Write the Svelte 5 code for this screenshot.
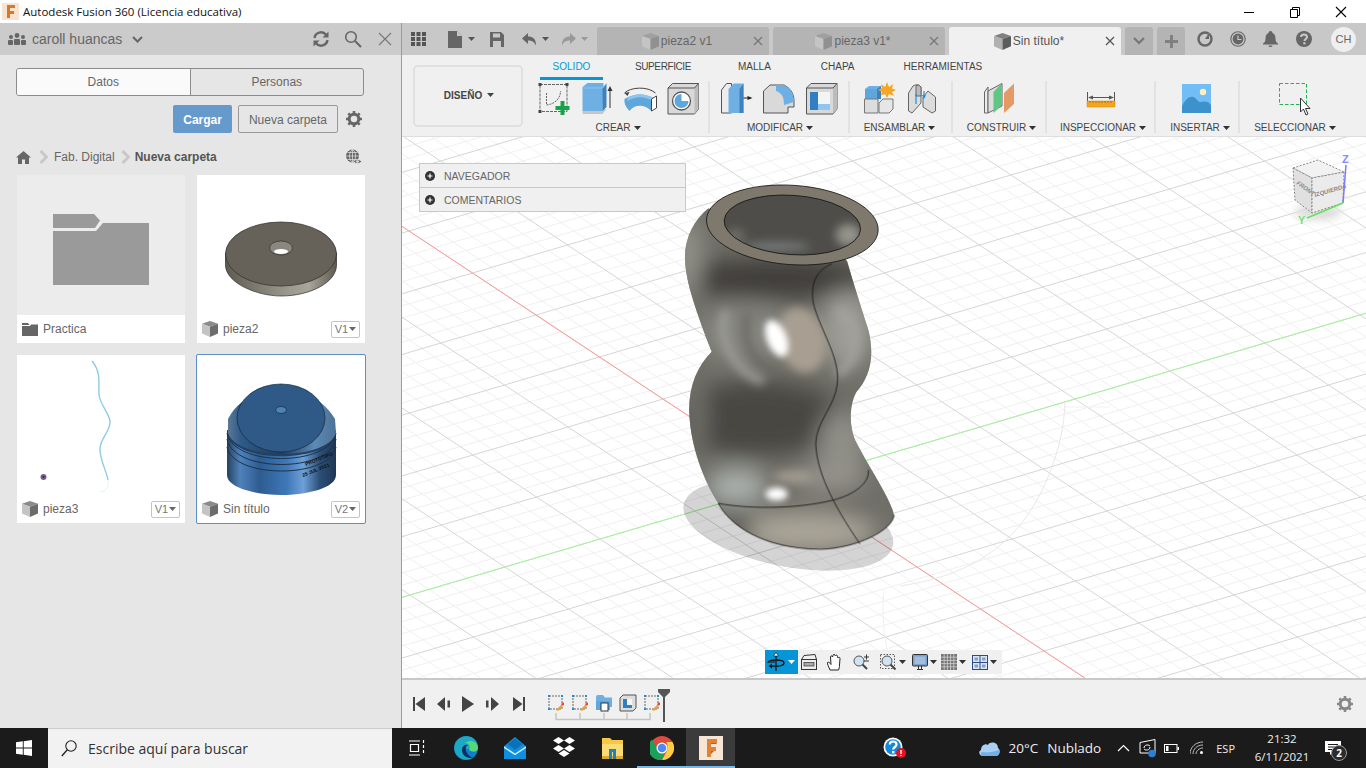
<script>
  // Ground grid: parallel projection, major cell vectors measured off the axes
  const O = [790, 483];
  const A = [63.5, 42];
  const B = [95, -28];
  const L = 30;

  function seg(u1, v1, u2, v2) {
    const x1 = O[0] + u1 * A[0] + v1 * B[0];
    const y1 = O[1] + u1 * A[1] + v1 * B[1];
    const x2 = O[0] + u2 * A[0] + v2 * B[0];
    const y2 = O[1] + u2 * A[1] + v2 * B[1];
    return `M${x1.toFixed(1)} ${y1.toFixed(1)}L${x2.toFixed(1)} ${y2.toFixed(1)}`;
  }

  let minor = '';
  let major = '';
  for (let i = -L * 5; i <= L * 5; i++) {
    const t = i / 5;
    const d = seg(t, -L, t, L) + seg(-L, t, L, t);
    if (i % 5 === 0) major += d;
    else minor += d;
  }

  // nudge: left margin on the label, it is centred so half of it shows
  const groups = [
    { name: 'CREAR', w: 180, nudge: -2 },
    { name: 'MODIFICAR', w: 140, nudge: 2 },
    { name: 'ENSAMBLAR', w: 103, nudge: -2 },
    { name: 'CONSTRUIR', w: 94, nudge: 5 },
    { name: 'INSPECCIONAR', w: 109, nudge: 5 },
    { name: 'INSERTAR', w: 84, nudge: 6 },
    { name: 'SELECCIONAR', w: 108, nudge: 2 }
  ];
  const ribbonTabs = ['SOLIDO', 'SUPERFICIE', 'MALLA', 'CHAPA', 'HERRAMIENTAS'];
</script>

{#snippet cube(size, top, left, right)}
  <svg class="ico" width={size} height={size} viewBox="1 1 14 14">
    <path d="M8 1L15 3.5L8 6L1 3.5Z" fill={top} />
    <path d="M1 3.5L8 6V15L1 12Z" fill={left} />
    <path d="M15 3.5L8 6V15L15 12Z" fill={right} />
  </svg>
{/snippet}

{#snippet caret(c = '#444')}
  <svg class="ico caret" width="7" height="4" viewBox="0 0 7 4"><path d="M0 0H7L3.5 4Z" fill={c} /></svg>
{/snippet}

{#snippet sketchMark(x)}
  <svg class="ico" width="18" height="18" viewBox="0 0 18 18" style="margin-left:{x}px">
    <rect x="2" y="2" width="13" height="13" fill="none" stroke="#666" stroke-width="1" stroke-dasharray="2 1" />
    <path d="M1 1h2v2H1zM14 1h2v2h-2zM1 14h2v2H1z" fill="#1a8fe0" />
    <path d="M9 16L15 10l1.5 1.5L11 17Z" fill="#e8a33d" />
    <rect x="14.6" y="8.6" width="2.4" height="2.4" fill="#ee4444" />
  </svg>
{/snippet}

<div class="screen">
  <header class="titlebar">
    <svg class="ico" width="17" height="17" viewBox="0 0 17 17">
      <rect width="17" height="17" fill="#f6e3d2" />
      <path d="M5 2h8v3H8v3h4v3H8v4H5Z" fill="#d9772b" />
    </svg>
    <span class="title">Autodesk Fusion 360 (Licencia educativa)</span>
    <div class="winbtns">
      <svg class="ico" width="46" height="20" viewBox="0 0 46 20"><path d="M18 10.5H28" stroke="#000" /></svg>
      <svg class="ico" width="46" height="20" viewBox="0 0 46 20"><path d="M18.5 7.5h7v8h-7zM20.5 7.5V5.5h7v8h-2" fill="none" stroke="#000" /></svg>
      <svg class="ico" width="46" height="20" viewBox="0 0 46 20"><path d="M18 5L28 15M28 5L18 15" stroke="#000" stroke-width="1.1" /></svg>
    </div>
  </header>

  <div class="main">
    <aside class="side">
      <div class="side-head">
        <svg class="ico" width="18" height="14" viewBox="0 0 18 14">
          <g fill="#666"><circle cx="3" cy="5" r="2" /><circle cx="9" cy="3.5" r="2.4" /><circle cx="15" cy="5" r="2" /><rect x="0" y="8" width="5" height="5" rx="1" /><rect x="6" y="7" width="6" height="6" rx="1" /><rect x="13" y="8" width="5" height="5" rx="1" /></g>
        </svg>
        <span class="user">caroll huancas</span>
        <svg class="ico chev" width="11" height="7" viewBox="0 0 11 7"><path d="M1 1l4.5 4.5L10 1" fill="none" stroke="#666" stroke-width="2" /></svg>
        <span class="spacer"></span>
        <svg class="ico" width="18" height="18" viewBox="0 0 18 18"><g fill="none" stroke="#666" stroke-width="2.4"><path d="M2.5 8A6.5 6.5 0 0 1 14 4.8" /><path d="M15.5 10A6.5 6.5 0 0 1 4 13.2" /></g><path d="M16.5 1.5V7.5H10.5ZM1.5 16.5V10.5H7.5Z" fill="#666" /></svg>
        <svg class="ico search" width="18" height="18" viewBox="0 0 18 18"><circle cx="7" cy="7" r="5.3" fill="none" stroke="#666" stroke-width="1.6" /><path d="M11 11l6 6" stroke="#666" stroke-width="2" /></svg>
        <svg class="ico close" width="14" height="14" viewBox="0 0 14 14"><path d="M1 1L13 13M13 1L1 13" stroke="#777" stroke-width="1.1" /></svg>
      </div>

      <div class="seg">
        <div class="seg-item on">Datos</div>
        <div class="seg-item">Personas</div>
      </div>

      <div class="actions">
        <button class="btn primary">Cargar</button>
        <button class="btn">Nueva carpeta</button>
        <svg class="ico gear" width="16" height="16" viewBox="0 0 16 16"><circle cx="8" cy="8" r="4.8" fill="none" stroke="#666" stroke-width="3" /><path d="M8 0v3M8 13v3M0 8h3M13 8h3M2.3 2.3l2.1 2.1M11.6 11.6l2.1 2.1M13.7 2.3l-2.1 2.1M4.4 11.6l-2.1 2.1" stroke="#666" stroke-width="2.6" /></svg>
      </div>

      <div class="crumbs">
        <svg class="ico" width="15" height="13" viewBox="0 0 15 13"><path d="M7.5 0L15 6.5H13V13H9V8.5H6V13H2V6.5H0Z" fill="#666" /></svg>
        <svg class="ico sep" width="9" height="14" viewBox="0 0 9 14"><path d="M1.5 1l6 6-6 6" fill="none" stroke="#c8c8c8" stroke-width="3" /></svg>
        <span>Fab. Digital</span>
        <svg class="ico sep" width="9" height="14" viewBox="0 0 9 14"><path d="M1.5 1l6 6-6 6" fill="none" stroke="#c8c8c8" stroke-width="3" /></svg>
        <b>Nueva carpeta</b>
        <span class="spacer"></span>
        <svg class="ico" width="17" height="16" viewBox="0 0 17 16"><circle cx="7.5" cy="7" r="6.5" fill="#666" /><path d="M1 7h13M7.5 .5v13M2.5 3.5h10M2.5 10.5h10M4.5 7c0-3 1-5 3-6.5 2 1.5 3 3.5 3 6.5s-1 5-3 6.5C5.5 12 4.5 10 4.5 7Z" fill="none" stroke="#e6e6e6" stroke-width=".7" /><path d="M8 12.5q4.5-4 9 0q-4.5 4-9 0Z" fill="#666" stroke="#e6e6e6" stroke-width=".8" /><circle cx="12.5" cy="12.5" r="1.3" fill="#e6e6e6" /></svg>
      </div>

      <div class="cards">
        <article class="card folder">
          <div class="thumb">
            <svg width="96" height="71" viewBox="0 0 96 71">
              <path d="M0 0H41L47 6.5L42 14H0Z" fill="#9a9a9a" />
              <path d="M0 17H43L50 9H96V71H0Z" fill="#9a9a9a" />
            </svg>
          </div>
          <footer>
            <svg class="ico" width="16" height="13" viewBox="0 0 16 13"><path d="M0 0h6l1.5 2H0ZM0 3h8l1-1.5h7V13H0Z" fill="#666" /></svg>
            <span>Practica</span>
          </footer>
        </article>

        <article class="card">
          <div class="thumb">
            <svg width="168" height="140" viewBox="0 0 168 140">
              <defs>
                <linearGradient id="discside" x1="0" x2="1" y1="0" y2="0">
                  <stop offset="0" stop-color="#5f5b50" /><stop offset=".55" stop-color="#9a978d" /><stop offset=".75" stop-color="#a8a59b" /><stop offset="1" stop-color="#5e5a50" />
                </linearGradient>
              </defs>
              <path d="M28.5 78V90C28.5 108 60 121 84 121C112 121 139.5 108 139.5 90V78Z" fill="url(#discside)" stroke="#2e2c28" stroke-width=".7" />
              <ellipse cx="84" cy="79" rx="55.5" ry="32" fill="#66625a" stroke="#2e2c28" stroke-width=".7" />
              <ellipse cx="84" cy="73" rx="11.5" ry="7" fill="#8a877f" stroke="#2e2c28" stroke-width=".7" />
              <ellipse cx="84" cy="76.5" rx="7" ry="2.4" fill="#fff" />
            </svg>
          </div>
          <footer>
            {@render cube(16, '#8a8a8a', '#c4c4c4', '#6c6c6c')}
            <span>pieza2</span>
            <span class="ver">V1{@render caret('#666')}</span>
          </footer>
        </article>

        <article class="card">
          <div class="thumb">
            <svg width="168" height="140" viewBox="0 0 168 140">
              <path d="M75 6C85 18 81 30 82 40C84 52 94 60 93 68C92 78 83 84 83 94C83 106 89 114 91 125" fill="none" stroke="#8ecbe8" stroke-width="1.4" />
              <path d="M91 125C92 134 88 136 83 137" fill="none" stroke="#e4f3fa" stroke-width="1" />
              <circle cx="26.5" cy="122" r="3" fill="#75608f" />
              <circle cx="26.5" cy="122" r="1" fill="#312050" />
            </svg>
          </div>
          <footer>
            {@render cube(16, '#8a8a8a', '#c4c4c4', '#6c6c6c')}
            <span>pieza3</span>
            <span class="ver">V1{@render caret('#666')}</span>
          </footer>
        </article>

        <article class="card selected">
          <div class="thumb">
            <svg width="168" height="140" viewBox="0 0 168 140">
              <defs>
                <linearGradient id="capside" x1="0" x2="1" y1="0" y2="0">
                  <stop offset="0" stop-color="#27415f" /><stop offset=".12" stop-color="#4f82ba" /><stop offset=".3" stop-color="#2e5c91" /><stop offset=".55" stop-color="#3f78b8" /><stop offset=".7" stop-color="#6ea0d8" /><stop offset=".85" stop-color="#2b4f78" /><stop offset="1" stop-color="#1f3652" />
                </linearGradient>
                <linearGradient id="capcone" x1="0" x2="1" y1="0" y2="0">
                  <stop offset="0" stop-color="#5b7896" /><stop offset=".12" stop-color="#2e5a8a" /><stop offset=".5" stop-color="#1f3c5a" /><stop offset=".8" stop-color="#5d8ab5" /><stop offset="1" stop-color="#4e7196" />
                </linearGradient>
              </defs>
              <path d="M30 75V120C30 133 60 140 84 140C110 140 139 133 139 120V75Z" fill="url(#capside)" />
              <path d="M30 75C30 110 139 110 139 75Z" fill="#22405f" />
              <path d="M30 78C36 112 133 112 139 78M30 84C36 118 133 118 139 84M30 92C36 124 133 124 139 92" fill="none" stroke="#1c324a" stroke-width="1" />
              <path d="M31 64Q36 54 45 47H123Q132 54 138 64L139 78C130 106 40 106 31 78Z" fill="url(#capcone)" />
              <text x="109" y="111" transform="rotate(-22 109 111)" class="tiny">PROTOTIPO</text>
              <text x="106" y="122" transform="rotate(-22 106 122)" class="tiny">25 JUL 2021</text>
              <ellipse cx="84" cy="63" rx="44" ry="34" fill="#2f5a87" stroke="#16283b" stroke-width=".7" />
              <ellipse cx="84" cy="55" rx="5.5" ry="3.5" fill="#4d83b5" stroke="#16283b" stroke-width=".7" />
            </svg>
          </div>
          <footer>
            {@render cube(16, '#8a8a8a', '#c4c4c4', '#6c6c6c')}
            <span>Sin título</span>
            <span class="ver">V2{@render caret('#666')}</span>
          </footer>
        </article>
      </div>
    </aside>

    <section class="work">
      <div class="topbar">
        <svg class="ico" style="margin-left:9px" width="15" height="14" viewBox="0 0 15 14"><path d="M0 0h4v4H0zM5.5 0h4v4h-4zM11 0h4v4h-4zM0 5h4v4H0zM5.5 5h4v4h-4zM11 5h4v4h-4zM0 10h4v4H0zM5.5 10h4v4h-4zM11 10h4v4h-4z" fill="#555" /></svg>
        <svg class="ico" style="margin-left:22px" width="14" height="17" viewBox="0 0 14 17"><path d="M0 0H9L14 5V17H0Z" fill="#666" /><path d="M9 0V5H14" fill="#c8c8c8" /></svg>
        <span class="tcaret">{@render caret('#555')}</span>
        <svg class="ico" style="margin-left:15px" width="14" height="15" viewBox="0 0 14 15"><path d="M0 0H11L14 3V15H0Z" fill="#666" /><path d="M3 1.5H10V5.5H3ZM3 9H11V15H3Z" fill="#c8c8c8" /></svg>
        <svg class="ico" style="margin-left:18px" width="15" height="13" viewBox="0 0 15 13"><path d="M6 0V3.5C11 3.5 14 6 14 12.5C12 8.5 10 7.5 6 7.5V11L0 5.5Z" fill="#666" /></svg>
        <span class="tcaret b">{@render caret('#555')}</span>
        <svg class="ico" style="margin-left:12px" width="15" height="13" viewBox="0 0 15 13"><path d="M9 0V3.5C4 3.5 1 6 1 12.5C3 8.5 5 7.5 9 7.5V11L15 5.5Z" fill="#999" /></svg>
        <span class="tcaret b">{@render caret('#999')}</span>

        <div class="tab dim first">
          {@render cube(17, '#a0a0a0', '#c4c4c4', '#909090')}<span>pieza2 v1</span>
          <svg class="ico x" width="10" height="10" viewBox="0 0 10 10"><path d="M1 1L9 9M9 1L1 9" stroke="#777" stroke-width="1.3" /></svg>
        </div>
        <div class="tab dim">
          {@render cube(17, '#a0a0a0', '#c4c4c4', '#909090')}<span>pieza3 v1*</span>
          <svg class="ico x" width="10" height="10" viewBox="0 0 10 10"><path d="M1 1L9 9M9 1L1 9" stroke="#777" stroke-width="1.3" /></svg>
        </div>
        <div class="tab active">
          {@render cube(17, '#808080', '#b0b0b0', '#5c5c5c')}<span>Sin título*</span>
          <svg class="ico x" width="10" height="10" viewBox="0 0 10 10"><path d="M1 1L9 9M9 1L1 9" stroke="#555" stroke-width="1.3" /></svg>
        </div>
        <div class="mini">
          <svg class="ico" width="12" height="8" viewBox="0 0 12 8"><path d="M1 1l5 5 5-5" fill="none" stroke="#777" stroke-width="2.2" /></svg>
        </div>
        <div class="mini">
          <svg class="ico" width="13" height="13" viewBox="0 0 13 13"><path d="M5 0h3v5h5v3H8v5H5V8H0V5h5Z" fill="#808080" /></svg>
        </div>
        <svg class="ico tool" width="16" height="16" viewBox="0 0 16 16"><circle cx="8" cy="8" r="6.5" fill="none" stroke="#666" stroke-width="2.4" /><path d="M4 8.5L8 4.5V7L12 2L12.5 8.5H10L8 6" fill="#c8c8c8" /><path d="M8 8l4-6v6Z" fill="#666" /></svg>
        <svg class="ico tool t2" width="16" height="16" viewBox="0 0 16 16"><circle cx="8" cy="8" r="7.2" fill="none" stroke="#666" stroke-width="1.1" /><circle cx="8" cy="8" r="5.4" fill="#666" /><path d="M8 4.5V8.5H11.5" fill="none" stroke="#c8c8c8" stroke-width="1.2" /></svg>
        <svg class="ico tool t3" width="15" height="16" viewBox="0 0 15 16"><path d="M7.5 0C9 0 9.5 1 9.5 2C12 3 12.5 5 12.5 8C12.5 10 13.5 11.5 15 12.5V13.5H0V12.5C1.5 11.5 2.5 10 2.5 8C2.5 5 3 3 5.5 2C5.5 1 6 0 7.5 0ZM5.5 14.5H9.5C9.5 16.5 5.5 16.5 5.5 14.5Z" fill="#666" /></svg>
        <svg class="ico tool t4" width="16" height="16" viewBox="0 0 16 16"><circle cx="8" cy="8" r="8" fill="#666" /><path d="M5 6C5 2.5 11 2.5 11 6C11 8 8.5 8 8.5 10" fill="none" stroke="#c8c8c8" stroke-width="2" /><rect x="7.3" y="11.2" width="2.2" height="2.2" fill="#c8c8c8" /></svg>
        <div class="avatar">CH</div>
      </div>

      <div class="ribbon">
        <div class="design">DISEÑO{@render caret('#444')}</div>
        <div class="ribbon-main">
          <nav class="rtabs">
            {#each ribbonTabs as t, i}
              <span class="rtab" class:on={i === 0}>{t}</span>
            {/each}
          </nav>
          <div class="rgroups">
            {#each groups as g, gi}
              <div class="rgroup" style="width:{g.w}px">
                <div class="ricons">
                  {#if gi === 0}
                    <svg class="ico" width="36" height="34" viewBox="537.5 81 36 34">
                      <rect x="540.5" y="83.5" width="27" height="27" fill="none" stroke="#666" stroke-dasharray="3 1" />
                      <path d="M547 104C556 103 561 97 561 90M547 92V104" fill="none" stroke="#666" stroke-dasharray="2 1" />
                      <path d="M539 82h3v3h-3zM566 82h3v3h-3zM539 109h3v3h-3z" fill="#444" />
                      <path d="M561 100h4v5h5v4h-5v5h-4v-5h-5v-4h5Z" fill="#17a347" />
                    </svg>
                    <svg class="ico" width="36" height="34" viewBox="580.5 81 36 34">
                      <path d="M583 110V113L603 113L607 108H590Z" fill="#c6c6c6" />
                      <path d="M583 86L588 82H604L603 110H583Z" fill="#6eb0e4" />
                      <path d="M603 87V110L607 106V82.5Z" fill="#3f82bb" />
                      <path d="M583 87H603L607 82.5" fill="none" stroke="#8ec6f0" />
                      <path d="M610.5 88V107" stroke="#333" /><path d="M608 90L610.5 85L613 90Z" fill="#333" />
                    </svg>
                    <svg class="ico" width="36" height="34" viewBox="623.5 81 36 34">
                      <path d="M625 92C631 86 648 85 656 92" fill="none" stroke="#444" />
                      <path d="M625 92L630 91L628 95Z" fill="#444" />
                      <path d="M625 98C635 92 645 92 656 98L652 110C645 103 635 103 630 110Q624 104 625 98Z" fill="#5ea7dd" />
                      <path d="M628 97C636 92 645 92 654 97L653 100C645 95 636 95 628 100Z" fill="#8dc5ee" />
                      <path d="M652 98L657 95V107L652 110Z" fill="#fff" stroke="#444" />
                    </svg>
                    <svg class="ico" width="36" height="34" viewBox="666.5 81 36 34">
                      <path d="M668.5 87L673 82.5H699V108L695 113H668.5Z" fill="#d9d9d9" stroke="#555" />
                      <path d="M695 87V113L699 108V82.5Z" fill="#bcbcbc" />
                      <path d="M668.5 87H695L699 82.5" fill="none" stroke="#555" />
                      <circle cx="682" cy="100" r="9" fill="#fff" stroke="#555" stroke-width="1.3" />
                      <path d="M682 93A7 7 0 1 0 689 100H682Z" fill="#5ea7dd" />
                    </svg>
                  {:else if gi === 1}
                    <svg class="ico" width="36" height="34" viewBox="719.5 81 36 34">
                      <path d="M723 112V89L728 82.5H733V112Z" fill="#ececec" stroke="#555" />
                      <path d="M730 88L735 82.5H745V112H730Z" fill="#6eb0e4" />
                      <path d="M745 82.5V112L741 112V88Z" fill="#3f82bb" />
                      <path d="M745 97H752" stroke="#222" /><path d="M749 95L754 97L749 99Z" fill="#222" />
                    </svg>
                    <svg class="ico" width="36" height="34" viewBox="763 81 36 34">
                      <path d="M765.5 112V90L772 84H786C792 87 796 92 796 100V106H790V112Z" fill="#d9d9d9" stroke="#555" />
                      <path d="M778 84H786C792 87 796 92 796 101L786 104C786 96 784 92 778 90Z" fill="#6eb0e4" />
                    </svg>
                    <svg class="ico" width="36" height="34" viewBox="806 81 36 34">
                      <path d="M808.5 87L813 82.5H839V108L835 113H808.5Z" fill="#d9d9d9" stroke="#555" />
                      <path d="M835 87V113L839 108V82.5Z" fill="#bcbcbc" />
                      <path d="M808.5 87H835L839 82.5" fill="none" stroke="#555" />
                      <path d="M812 91H820V103H831V109H812Z" fill="#2f7fc2" />
                      <path d="M820 91H832V103H820Z" fill="#f4f4f4" />
                      <path d="M820 103H832V109H820Z" fill="#8ec6f0" />
                    </svg>
                  {:else if gi === 2}
                    <svg class="ico" width="36" height="34" viewBox="862 81 36 34">
                      <path d="M866 88L870 85H882V98H866Z" fill="#6eb0e4" /><path d="M866 88H878V98H866Z" fill="#5ea7dd" /><path d="M878 88L882 85V98H878Z" fill="#3f82bb" />
                      <path d="M865.5 98H879V112H865.5Z" fill="#dcdcdc" stroke="#777" /><path d="M880 102L884 98H894V108L890 112H880Z" fill="#e6e6e6" stroke="#777" />
                      <path d="M888 81L890 86L894 83L893 87.5L897 89L893 91L895 95L890 93L888 97L886 93L882 94.5L883 90.5L879 89L883 87L882 83L886 86Z" fill="#f5a623" />
                    </svg>
                    <svg class="ico" width="36" height="34" viewBox="906 81 36 34">
                      <path d="M910.5 110V92L915 85Q920 82 923 86V102L914 112Z" fill="#dcdcdc" stroke="#666" />
                      <path d="M918 84.5Q921 83 923 86V95H918Z" fill="#bbb" stroke="#666" />
                      <path d="M925 96L930 90L937.5 96V110L934 112L925 106Z" fill="#dcdcdc" stroke="#666" />
                      <path d="M918 93V103M926 90V97" stroke="#1a8fe0" stroke-width="1.2" />
                      <path d="M924 94L926 98L928 94Z" fill="#1a8fe0" />
                    </svg>
                  {:else if gi === 3}
                    <svg class="ico" width="36" height="34" viewBox="983 81 36 34">
                      <path d="M986.5 91L990 86V112L986.5 112Z" fill="#ececec" stroke="#666" />
                      <path d="M990 90L1004 82.5V105L990 112Z" fill="#ddd" stroke="#666" />
                      <path d="M995.5 91L1003 83V105L995.5 112Z" fill="#5fc783" />
                      <path d="M1006 92L1016 82.5V103L1006 112Z" fill="#e59a66" />
                    </svg>
                  {:else if gi === 4}
                    <svg class="ico" width="36" height="34" viewBox="1084 81 36 34">
                      <path d="M1088.5 91V102M1115.5 91V102M1090 96.5H1114" stroke="#555" />
                      <path d="M1089 96.5L1094 94.5V98.5ZM1115 96.5L1110 94.5V98.5Z" fill="#555" />
                      <rect x="1088" y="100" width="28" height="6" fill="#f5a51c" stroke="#d08a10" stroke-width=".5" />
                      <path d="M1091 100v2M1094 100v2M1097 100v2M1100 100v2M1103 100v2M1106 100v2M1109 100v2M1112 100v2" stroke="#8a5f10" stroke-width=".7" />
                    </svg>
                  {:else if gi === 5}
                    <svg class="ico" width="30" height="30" viewBox="1184 83 30 30">
                      <rect x="1184" y="83" width="29" height="29" fill="#72bdf5" />
                      <circle cx="1205" cy="91" r="3.2" fill="#f9f1c2" />
                      <path d="M1184 105C1190 93 1196 94 1200 100C1203 103 1208 97 1213 104V112H1184Z" fill="#3e92cc" />
                    </svg>
                  {:else}
                    <svg class="ico" width="36" height="34" viewBox="1276 81 36 34">
                      <rect x="1279.5" y="82.5" width="27" height="21" fill="none" stroke="#1fb44f" stroke-dasharray="3.5 2" />
                      <path d="M1300.5 97V111L1303.5 108L1306 114L1308 113L1305.5 107.5L1310 107.5Z" fill="#fff" stroke="#333" />
                    </svg>
                  {/if}
                </div>
                <div class="rlabel" style="margin-left:{g.nudge}px">{g.name}{@render caret('#333')}</div>
              </div>
            {/each}
          </div>
        </div>
      </div>

      <div class="canvas">
        <svg class="scene" width="964" height="541" viewBox="402 137 964 541">
          <defs>
            <filter id="blur" x="-40%" y="-40%" width="180%" height="180%"><feGaussianBlur stdDeviation="34" /></filter>
            <filter id="blur2" x="-40%" y="-40%" width="180%" height="180%"><feGaussianBlur stdDeviation="14" /></filter>
            <filter id="blur3" x="-60%" y="-60%" width="220%" height="220%"><feGaussianBlur stdDeviation="9" /></filter>
            <filter id="cubeshadow" x="-40%" y="-40%" width="180%" height="180%"><feGaussianBlur stdDeviation="4" /></filter>
            <clipPath id="bodyclip">
              <path d="M145 115C100 150 72 210 75 270C78 340 110 430 155 545C110 590 85 650 88 730C92 830 130 930 175 1000C205 1060 300 1135 480 1138C590 1135 700 1080 702 1035C695 990 620 880 585 810C565 760 570 700 590 665C630 620 645 560 625 480C600 400 580 340 562 275L500 180Z" />
            </clipPath>
            <clipPath id="innerclip"><ellipse cx="397" cy="165" rx="205" ry="89" transform="rotate(4 397 165)" /></clipPath>
          </defs>

          <path d={minor} stroke="#f0f0f0" stroke-width="1" fill="none" />
          <path d={major} stroke="#d6d6d6" stroke-width="1" fill="none" />
          <path d={seg(-30, 0, 30, 0)} stroke="#ff9a9a" stroke-width="1" fill="none" />
          <path d={seg(0, -30, 0, 30)} stroke="#a4f59a" stroke-width="1" fill="none" />
          <path d="M1065 402C1064 450 1040 510 1005 541C975 568 940 580 900 586" fill="none" stroke="#e8e8e8" />
          <path d="M884 590C881 620 885 650 895 678M1065 407H1110" fill="none" stroke="#f0f0f0" />

          <g transform="translate(660 170) scale(.33333)">
            <ellipse cx="385" cy="1065" rx="320" ry="125" transform="rotate(11 385 1065)" fill="#000" fill-opacity=".17" />
            <g clip-path="url(#bodyclip)">
              <rect x="40" y="30" width="700" height="1150" fill="#6f6e67" />
              <g filter="url(#blur)">
                <ellipse cx="340" cy="325" rx="290" ry="60" fill="#3f3e3a" />
                <ellipse cx="85" cy="260" rx="34" ry="120" fill="#9a9990" />
                <ellipse cx="260" cy="490" rx="150" ry="90" fill="#85857f" />
                <ellipse cx="560" cy="480" rx="80" ry="120" fill="#9e9e97" />
                <ellipse cx="290" cy="745" rx="260" ry="110" fill="#484742" />
                <ellipse cx="110" cy="740" rx="24" ry="90" fill="#7c7b74" />
                <ellipse cx="545" cy="830" rx="70" ry="110" fill="#908f87" />
                <ellipse cx="230" cy="950" rx="90" ry="55" fill="#aab0ad" />
                <ellipse cx="510" cy="925" rx="110" ry="40" fill="#94938b" />
                <ellipse cx="440" cy="1085" rx="210" ry="60" fill="#aaa599" />
                <ellipse cx="235" cy="1085" rx="40" ry="55" fill="#55544e" />
              </g>
              <g filter="url(#blur2)" fill="none">
                <path d="M200 420C165 500 220 600 310 635" stroke="#9c9c96" stroke-width="26" />
                <path d="M265 430C240 500 270 570 345 612" stroke="#68685f" stroke-width="20" />
                <path d="M530 420C610 470 600 565 530 615" stroke="#a4a49d" stroke-width="22" />
                <ellipse cx="425" cy="510" rx="72" ry="100" transform="rotate(-15 425 510)" fill="#a89f92" />
                <ellipse cx="400" cy="920" rx="60" ry="18" fill="#a39e92" />
              </g>
              <g filter="url(#blur3)">
                <ellipse cx="350" cy="505" rx="30" ry="58" transform="rotate(-22 350 505)" fill="#fff" />
                <ellipse cx="350" cy="972" rx="34" ry="20" fill="#fff" />
              </g>
            </g>
            <ellipse cx="397" cy="165" rx="258" ry="119" transform="rotate(4 397 165)" fill="#7f796d" stroke="#111" stroke-width="2.4" />
            <ellipse cx="397" cy="165" rx="205" ry="89" transform="rotate(4 397 165)" fill="#4e4d49" />
            <g clip-path="url(#innerclip)">
              <g filter="url(#blur2)">
                <ellipse cx="350" cy="230" rx="100" ry="14" fill="#777c7a" />
                <ellipse cx="565" cy="195" rx="38" ry="34" fill="#94938b" />
                <ellipse cx="225" cy="200" rx="30" ry="26" fill="#6d6c66" />
              </g>
            </g>
            <ellipse cx="397" cy="165" rx="205" ry="89" transform="rotate(4 397 165)" fill="none" stroke="#111" stroke-width="2.4" />
            <g fill="none" stroke="#111" stroke-width="2.4">
              <path d="M515 282C470 300 450 340 460 400C480 480 540 560 532 640C525 710 470 750 467 820C470 900 510 990 600 1122" />
              <path d="M175 1000C250 1015 400 1020 520 990C580 975 630 940 625 900" />
              <path d="M175 1000C205 1060 300 1135 480 1138C590 1135 700 1080 702 1035" />
            </g>
          </g>

          <!-- view cube -->
          <ellipse cx="1318" cy="212" rx="24" ry="8" fill="#ddd" filter="url(#cubeshadow)" />
          <path d="M1293 168L1318 160L1344 172L1312 178Z" fill="#f2f2f2" stroke="#888" stroke-dasharray="2 1.5" />
          <path d="M1293 168L1312 178V213L1295 200Z" fill="#e0e0e0" stroke="#888" stroke-dasharray="2 1.5" />
          <path d="M1344 172L1312 178V213L1343 203Z" fill="#ebebeb" stroke="#888" stroke-dasharray="2 1.5" />
          <text x="1315" y="197" transform="rotate(-16 1315 197)" class="cubetxt">IZQUIERDA</text>
          <text x="1296" y="184" transform="rotate(35 1296 184)" class="cubetxt">FRONT</text>
          <path d="M1343 203L1346 165" stroke="#7a7aff" stroke-width="1.5" />
          <path d="M1343 203L1307 218" stroke="#66e05c" stroke-width="1.5" />
          <text x="1342" y="163" class="axis z">Z</text>
          <text x="1298" y="224" class="axis y">Y</text>
        </svg>

        <div class="browser">
          <div class="browser-row">
            <svg class="ico" width="10" height="10" viewBox="0 0 10 10"><circle cx="5" cy="5" r="5" fill="#333" /><path d="M2.5 5h5M5 2.5v5" stroke="#fff" stroke-width="1.2" /></svg>
            <span>NAVEGADOR</span>
          </div>
          <div class="browser-row">
            <svg class="ico" width="10" height="10" viewBox="0 0 10 10"><circle cx="5" cy="5" r="5" fill="#333" /><path d="M2.5 5h5M5 2.5v5" stroke="#fff" stroke-width="1.2" /></svg>
            <span>COMENTARIOS</span>
          </div>
        </div>

        <div class="navbar">
          <div class="navon">
            <svg class="ico" width="18" height="20" viewBox="0 0 18 20"><path d="M9 1V19M2 10H8" stroke="#111" stroke-width="1.2" /><path d="M6.5 4L9 .5L11.5 4Z" fill="#fff" stroke="#111" stroke-width=".6" /><path d="M1 11C1 7 17 7 17 11C17 14 10 14.5 5 14" fill="none" stroke="#111" stroke-width="1.3" /><path d="M5 11.5L1.5 14L5 16.5Z" fill="#111" /></svg>
            {@render caret('#fff')}
          </div>
          <svg class="ico n1" width="16" height="16" viewBox="0 0 16 16"><rect x=".5" y="5.5" width="15" height="10" fill="#eee" stroke="#333" /><path d="M.5 5.5L3 1.5L14 .5L15.5 5.5" fill="none" stroke="#333" /><rect x="3" y="8.5" width="10" height="3.5" fill="#aaa" stroke="#333" stroke-width=".7" /></svg>
          <svg class="ico n2" width="16" height="17" viewBox="0 0 16 17"><path d="M3 16C2 13 0 10 .5 8.5C1.5 7.5 3 9 4 10.5L3.5 3C3.5 1.5 5.5 1.5 5.5 3L6 1.5C6 0 8 0 8 1.5L8.5 2C9 .5 10.5 1 10.5 2.5L11 4C11.5 3 13 3 13 4.5L12.5 11C12.5 13 12 15 11.5 16Z" fill="#fff" stroke="#222" /></svg>
          <svg class="ico n3" width="17" height="16" viewBox="0 0 17 16"><circle cx="6" cy="7" r="5" fill="#cfe3f2" stroke="#555" /><path d="M9.5 10.5L14 15" stroke="#444" stroke-width="2" /><path d="M11 3h5M13.5 .5v5M11 7h5" stroke="#333" /></svg>
          <svg class="ico n4" width="17" height="17" viewBox="0 0 17 17"><rect x=".5" y=".5" width="14" height="14" fill="none" stroke="#555" stroke-dasharray="1.5 1.5" /><circle cx="7" cy="7" r="5" fill="#cfe3f2" stroke="#555" /><path d="M10.5 10.5L15.5 15.5" stroke="#444" stroke-width="2" /></svg>
          {@render caret('#333')}
          <svg class="ico n5" width="16" height="16" viewBox="0 0 16 16"><rect x=".5" y=".5" width="15" height="11.5" rx="1" fill="#7ba0cc" stroke="#333" /><rect x="2.5" y="2.5" width="11" height="7.5" fill="#a2bedd" /><path d="M5 15.5H11M6.5 12V15M9.5 12V15" stroke="#333" /></svg>
          {@render caret('#333')}
          <svg class="ico n6" width="16" height="16" viewBox="0 0 16 16"><rect width="16" height="16" fill="#777" /><path d="M3.2 0V16M6.4 0V16M9.6 0V16M12.8 0V16M0 3.2H16M0 6.4H16M0 9.6H16M0 12.8H16" stroke="#ddd" stroke-width=".7" /></svg>
          {@render caret('#333')}
          <svg class="ico n7" width="16" height="15" viewBox="0 0 16 15"><rect x=".5" y=".5" width="15" height="14" fill="#dbe6f2" stroke="#2e4d7c" /><path d="M8 .5V14.5M.5 7.5H15.5" stroke="#2e4d7c" /><path d="M2.5 2.5h3.5v3H2.5zM10 2.5h3.5v3H10zM2.5 9.5h3.5v3H2.5zM10 9.5h3.5v3H10z" fill="#7fa2cc" /></svg>
          {@render caret('#333')}
        </div>
      </div>

      <div class="timeline">
        <svg class="ico" width="12" height="14" viewBox="0 0 12 14"><path d="M0 0H2V14H0ZM12 0V14L2.5 7Z" fill="#444" /></svg>
        <svg class="ico c" width="13" height="14" viewBox="0 0 13 14"><path d="M8 0V14L0 7ZM10.5 3.5H13V10.5H10.5Z" fill="#444" /></svg>
        <svg class="ico c" width="12" height="16" viewBox="0 0 12 16"><path d="M0 0L12 8L0 16Z" fill="#444" /></svg>
        <svg class="ico c" width="13" height="14" viewBox="0 0 13 14"><path d="M5 0V14L13 7ZM0 3.5H2.5V10.5H0Z" fill="#444" /></svg>
        <svg class="ico c last" width="12" height="14" viewBox="0 0 12 14"><path d="M0 0V14L9.5 7ZM10 0H12V14H10Z" fill="#444" /></svg>

        <div class="track">
          <div class="features">
            {@render sketchMark(0)}
            {@render sketchMark(6)}
            <svg class="ico" style="margin-left:6px" width="18" height="18" viewBox="0 0 18 18"><path d="M1 3Q1 1 3 1H8L10 3.5H17V13H1Z" fill="#6eb0e4" /><path d="M1 7H15V16H1Z" fill="#5ea7dd" /><rect x="6" y="9" width="7" height="8" fill="#fff" stroke="#333" /></svg>
            <svg class="ico" style="margin-left:6px" width="18" height="18" viewBox="0 0 18 18"><path d="M1 4L4 1H17V14L14 17H1Z" fill="#ddd" stroke="#555" /><path d="M4 5H8V11H13V14H4Z" fill="#2f7fc2" /><path d="M8 5H13V11H8Z" fill="#f5f5f5" /></svg>
            {@render sketchMark(6)}
          </div>
          <svg class="bracket" width="96" height="8" viewBox="0 0 96 8"><path d="M1 0V6.5H95V0M25 0V6M49 0V6M72 0V6" fill="none" stroke="#c4c4c4" stroke-width="1.5" /></svg>
          <svg class="marker" width="12" height="33" viewBox="0 0 12 33"><path d="M0 0H12V3L7 8V33H5V8L0 3Z" fill="#555" /></svg>
        </div>

        <span class="spacer"></span>
        <svg class="ico tgear" width="16" height="16" viewBox="0 0 16 16"><circle cx="8" cy="8" r="4.8" fill="none" stroke="#888" stroke-width="3" /><path d="M8 0v3M8 13v3M0 8h3M13 8h3M2.3 2.3l2.1 2.1M11.6 11.6l2.1 2.1M13.7 2.3l-2.1 2.1M4.4 11.6l-2.1 2.1" stroke="#888" stroke-width="2.6" /></svg>
      </div>
    </section>
  </div>

  <footer class="taskbar">
    <div class="start">
      <svg class="ico" width="16" height="16" viewBox="0 0 16 16"><path d="M0 2.3L6.8 1.3V7.6H0ZM7.7 1.2L16 0V7.6H7.7ZM0 8.4H6.8V14.7L0 13.7ZM7.7 8.4H16V16L7.7 14.8Z" fill="#fff" /></svg>
    </div>
    <div class="search-box">
      <svg class="ico" width="16" height="17" viewBox="0 0 16 17"><circle cx="10" cy="6" r="5.2" fill="none" stroke="#222" stroke-width="1.1" /><path d="M6.3 9.8L.8 16" stroke="#222" stroke-width="1.3" /></svg>
      <span>Escribe aquí para buscar</span>
    </div>
    <div class="tbicon">
      <svg class="ico" width="16" height="16" viewBox="0 0 16 16"><path d="M0 1H11M0 15H11M1.5 4.5H9.5V11.5H1.5ZM14.5 0V3M14.5 5V8M14.5 10V13" fill="none" stroke="#fff" stroke-width="1.2" /></svg>
    </div>
    <div class="tbicon">
      <svg class="ico" width="26" height="26" viewBox="0 0 26 26">
        <circle cx="13" cy="13" r="12" fill="#0f7fc9" />
        <path d="M4 6C8 0 20-1 24 8C26 13 21 16 16 14C13 13 10 14 10 17C10 20 14 23 19 23C12 27 3 23 1.5 15C1 11 2 8 4 6Z" fill="#1ba9c4" />
        <path d="M12 8C17 4 24 6 25 12C25.5 17 20 18 16 15C18 11 16 8 12 8Z" fill="#58d67a" />
        <path d="M9 15C9 11 12 9 15 10C13 11 12 13 13 16C14 19 17 22 20 22.5C15 24 9 21 9 15Z" fill="#0a2f66" />
      </svg>
    </div>
    <div class="tbicon">
      <svg class="ico" width="24" height="22" viewBox="0 0 24 24"><path d="M0 10L12 0L24 10V24H0Z" fill="#0f8fe0" /><path d="M0 10L12 18L24 10V12L12 20L0 12Z" fill="#cfeeff" /><path d="M4 8L12 1.5L20 8L12 14Z" fill="#0a70b8" /></svg>
    </div>
    <div class="tbicon">
      <svg class="ico" width="24" height="22" viewBox="0 0 24 22"><path d="M6.5 0L12 3.5L6.5 7L1 3.5ZM17.5 0L23 3.5L17.5 7L12 3.5ZM6.5 8L12 11.5L6.5 15L1 11.5ZM17.5 8L23 11.5L17.5 15L12 11.5ZM12 13L17.5 16.5L12 20L6.5 16.5Z" fill="#fff" /></svg>
    </div>
    <div class="tbicon">
      <svg class="ico" width="23" height="24" viewBox="0 0 23 24"><path d="M1 2H9L11 4H22V9H1Z" fill="#f6c846" /><rect x="1" y="8" width="21" height="15" fill="#fbdc74" /><rect x="1" y="20" width="21" height="3" fill="#e0a92e" /><path d="M8 13H15V23H12V16H11V23H8Z" fill="#1d80c8" /></svg>
    </div>
    <div class="tbicon open">
      <svg class="ico" width="24" height="24" viewBox="0 0 24 24"><circle cx="12" cy="12" r="12" fill="#dd4b3e" /><path d="M22.4 6A12 12 0 0 1 12 24L17 15C18 12.5 18 8 16 6Z" fill="#ffce43" /><path d="M2 3.5L7 12C8 15 11 17.5 14.5 17L12 24A12 12 0 0 1 2 3.5Z" fill="#1da15a" /><circle cx="12" cy="12" r="5.5" fill="#fff" /><circle cx="12" cy="12" r="4.3" fill="#4c8bf5" /></svg>
    </div>
    <div class="tbicon open active">
      <svg class="ico" width="24" height="24" viewBox="0 0 24 24"><rect width="24" height="24" fill="#f7e6d6" /><path d="M8 3H18V7H12V11H17V15H12V21H8Z" fill="#dd8438" /><path d="M12 7H18L17 8H12ZM12 15H15L12 18Z" fill="#b5631f" /></svg>
    </div>
    <span class="spacer"></span>
    <div class="tray">
      <svg class="ico helpi" width="24" height="22" viewBox="0 0 24 22"><circle cx="10" cy="10" r="9.5" fill="#fff" /><circle cx="10" cy="10" r="7.8" fill="#1788d8" /><path d="M6.8 7.5C6.8 3.5 13.5 3.5 13.5 7.5C13.5 10 10.2 10 10.2 12.5" fill="none" stroke="#fff" stroke-width="2.2" /><rect x="9" y="14" width="2.4" height="2.4" fill="#fff" /><circle cx="18" cy="16" r="5" fill="#e81123" /><path d="M18 13V17M18 18V19" stroke="#fff" stroke-width="1.4" /></svg>
      <svg class="ico cloud" width="22" height="15" viewBox="0 0 22 15"><path d="M5 15C1 15 0 10 3 9C3 4 8 2 10 4C12 0 20 1 20 7C23 9 22 15 18 15Z" fill="#a9cff2" /><path d="M5 15C3 15 2 12 4 11C9 12 15 11 21 9C22 11 21 15 18 15Z" fill="#74aee6" /></svg>
      <span class="temp">20°C</span>
      <span class="weather">Nublado</span>
      <svg class="ico up" width="13" height="8" viewBox="0 0 13 8"><path d="M1 7L6.5 1.5L12 7" fill="none" stroke="#fff" stroke-width="1.2" /></svg>
      <svg class="ico syn" width="17" height="19" viewBox="0 0 17 19"><path d="M1 3.5L16 .5V14H1Z" fill="none" stroke="#fff" /><path d="M5 9C5 6 9 5 11 7M11 8C11 11 7 12 5 10" fill="none" stroke="#fff" /><circle cx="13" cy="14.5" r="3.8" fill="#2f7fd1" /></svg>
      <svg class="ico bat" width="15" height="9" viewBox="0 0 15 9"><rect x=".5" y=".5" width="12.5" height="8" fill="none" stroke="#fff" /><rect x="2" y="2" width="2.5" height="5" fill="#fff" /><rect x="13.5" y="3" width="1.5" height="3" fill="#fff" /></svg>
      <svg class="ico wifi" width="14" height="14" viewBox="0 0 14 14"><path d="M0 13C0 6 6 1 13 1M3 13C3 8 7 4 13 4M6 13C6 10 9 7 13 7" fill="none" stroke="#bbb" /><circle cx="11.5" cy="11.5" r="1.5" fill="#fff" /></svg>
      <span class="lang">ESP</span>
      <div class="clock"><span>21:32</span><span>6/11/2021</span></div>
      <div class="notif">
        <svg class="ico" width="16" height="15" viewBox="0 0 16 15"><path d="M0 0H16V11H8L5 14V11H0Z" fill="#fff" /><path d="M3 3.5H13M3 6H13M3 8.5H9" stroke="#1b1b1b" /></svg>
        <span class="badge">2</span>
      </div>
    </div>
  </footer>
</div>

<style>
  :global(body) {
    margin: 0;
    overflow: hidden;
  }

  .screen {
    width: 1366px;
    height: 768px;
    display: flex;
    flex-direction: column;
    overflow: hidden;
    font-family: 'Liberation Sans', Arial, sans-serif;
    color: #444;
    background: #fff;
  }

  .ico {
    display: block;
    flex: none;
  }

  .spacer {
    flex: 1;
  }

  .titlebar {
    height: 23px;
    flex: none;
    display: flex;
    align-items: center;
    padding-left: 2px;
    background: #fff;
  }

  .title {
    margin-left: 4px;
    font: 11.5px 'Open Sans', sans-serif;
    color: #111;
  }

  .winbtns {
    margin-left: auto;
    display: flex;
    padding-right: 2px;
  }

  .main {
    flex: 1;
    display: flex;
    min-height: 0;
  }

  .side {
    width: 401px;
    flex: none;
    background: #e6e6e6;
    box-sizing: border-box;
  }

  .side-head {
    height: 32px;
    background: #cbcbcb;
    display: flex;
    align-items: center;
    padding: 0 9px 0 8px;
  }

  .user {
    margin-left: 6px;
    font-size: 14px;
    color: #666;
  }

  .chev {
    margin-left: 10px;
  }

  .search {
    margin-left: 14px;
  }

  .close {
    margin-left: 16px;
  }

  .seg {
    margin: 13px 37px 0 16px;
    height: 28px;
    display: flex;
    border: 1px solid #8c8c8c;
    border-radius: 3px;
    box-sizing: border-box;
    font-size: 12px;
    overflow: hidden;
  }

  .seg-item {
    flex: 1;
    display: flex;
    align-items: center;
    justify-content: center;
    color: #666;
  }

  .seg-item.on {
    background: #fafafa;
    border-right: 1px solid #8c8c8c;
  }

  .actions {
    margin: 9px 40px 0 0;
    display: flex;
    justify-content: flex-end;
    align-items: center;
    gap: 6px;
  }

  .btn {
    height: 28px;
    padding: 1px 10px 0;
    border: 1px solid #9a9a9a;
    border-radius: 2px;
    background: transparent;
    font: 12px 'Liberation Sans', Arial, sans-serif;
    color: #666;
  }

  .btn.primary {
    background: #6699cc;
    border: 0;
    color: #fff;
    font-weight: 700;
  }

  .gear {
    margin-left: 2px;
    margin-right: -1px;
  }

  .crumbs {
    margin: 16px 39px 0 16px;
    height: 16px;
    display: flex;
    align-items: center;
    font-size: 12px;
    color: #666;
  }

  .sep {
    margin: 0 6px 0 8px;
  }

  .crumbs span + .sep {
    margin: 0 5px 0 6px;
  }

  .crumbs b {
    color: #555;
  }

  .cards {
    margin: 10px 0 0 17px;
    display: grid;
    grid-template-columns: 168px 168px;
    grid-auto-rows: 168px;
    gap: 12px;
  }

  .card {
    display: flex;
    flex-direction: column;
    background: #fff;
  }

  .card.selected {
    outline: 1px solid #5b8fc9;
    outline-offset: 0;
    border-radius: 1px;
  }

  .thumb {
    height: 140px;
    box-sizing: border-box;
    display: flex;
    align-items: center;
    justify-content: center;
  }

  .thumb svg {
    display: block;
  }

  .folder .thumb {
    background: #ececec;
    padding-top: 9px;
  }

  .card footer {
    flex: 1;
    display: flex;
    align-items: center;
    gap: 5px;
    padding: 0 5px;
    font-size: 12px;
    color: #666;
  }

  .tiny {
    font: bold 5px 'Liberation Sans', sans-serif;
    fill: #111;
  }

  .ver {
    margin-left: auto;
    width: 29px;
    height: 17px;
    box-sizing: border-box;
    border: 1px solid #c4c4c4;
    border-radius: 2px;
    display: flex;
    align-items: center;
    justify-content: center;
    gap: 1px;
    color: #777;
    font-size: 11px;
  }

  .work {
    flex: 1;
    min-width: 0;
    display: flex;
    flex-direction: column;
    border-left: 1px solid #9c9c9c;
  }

  .topbar {
    height: 32px;
    flex: none;
    background: #c8c8c8;
    display: flex;
    align-items: center;
  }

  .tcaret {
    margin-left: 6px;
  }

  .tcaret.b {
    margin-left: 5px;
  }

  .tab {
    width: 172px;
    height: 28px;
    margin-top: 4px;
    margin-left: 4px;
    box-sizing: border-box;
    border-radius: 3px 3px 0 0;
    display: flex;
    align-items: center;
    justify-content: center;
    gap: 2px;
    position: relative;
    font-size: 12px;
    color: #666;
    padding-right: 12px;
  }

  .tab.first {
    margin-left: 9px;
  }

  .tab.dim {
    background: #b4b4b4;
  }

  .tab.active {
    background: #f0f0f0;
    color: #555;
  }

  .tab .x {
    position: absolute;
    right: 6px;
    top: 9px;
  }

  .mini {
    width: 28px;
    height: 28px;
    margin: 4px 0 0 4px;
    border-radius: 3px 3px 0 0;
    background: #b4b4b4;
    display: flex;
    align-items: center;
    justify-content: center;
  }

  .tool {
    margin-left: 12px;
  }

  .t2 {
    margin-left: 17px;
  }

  .t3 {
    margin-left: 17px;
  }

  .t4 {
    margin-left: 18px;
  }

  .avatar {
    width: 25px;
    height: 25px;
    margin-left: 19px;
    border-radius: 50%;
    background: #efefef;
    display: flex;
    align-items: center;
    justify-content: center;
    font-size: 11px;
    color: #666;
  }

  .ribbon {
    height: 82px;
    flex: none;
    background: #f0f0f0;
    display: flex;
    box-sizing: border-box;
    border-bottom: 1px solid #dedede;
  }

  .design {
    width: 110px;
    height: 62px;
    margin: 10px 7px 0 11px;
    box-sizing: border-box;
    border: 2px solid #e0e0e0;
    border-radius: 5px;
    display: flex;
    align-items: center;
    justify-content: center;
    gap: 5px;
    padding: 0 0 2px 2px;
    font-size: 10px;
    font-weight: 700;
    color: #444;
  }

  .ribbon-main {
    flex: 1;
    display: flex;
    flex-direction: column;
  }

  .rtabs {
    height: 25px;
    display: flex;
    font-size: 10px;
    color: #444;
  }

  .rtab {
    height: 19px;
    padding-top: 6px;
    margin-right: 47px;
  }

  .rtab.on {
    color: #0696d7;
    width: 63px;
    text-align: center;
    margin-left: 10px;
    margin-right: 32px;
    box-shadow: inset 0 -3px 0 #0696d7;
  }

  .rtab:nth-child(2) {
    letter-spacing: -0.4px;
  }

  .rtab:nth-child(3) {
    margin-right: 50px;
  }

  .rtab:nth-child(4) {
    margin-right: 49px;
  }

  .rgroups {
    flex: 1;
    display: flex;
  }

  .rgroup {
    display: flex;
    flex-direction: column;
    align-items: center;
    box-sizing: border-box;
    border-right: 2px solid #e2e2e2;
    height: 52px;
    margin-top: 1px;
  }

  .rgroup:last-child {
    border-right: 0;
  }

  .ricons {
    height: 36px;
    display: flex;
    gap: 7px;
    align-items: center;
  }

  .rlabel {
    margin-top: 5px;
    display: flex;
    align-items: center;
    gap: 3px;
    font-size: 10px;
    color: #444;
  }

  .canvas {
    flex: 1;
    position: relative;
    min-height: 0;
    background: #fff;
    overflow: hidden;
  }

  .scene {
    position: absolute;
    left: 0;
    top: 0;
    display: block;
  }

  .cubetxt {
    font: italic bold 6px 'Liberation Sans', sans-serif;
    fill: #888;
  }

  .axis {
    font: bold 11px 'Liberation Sans', sans-serif;
  }

  .axis.z {
    fill: #8a8aff;
  }

  .axis.y {
    fill: #7be070;
  }

  .browser {
    position: absolute;
    left: 17px;
    top: 26px;
    width: 267px;
    box-sizing: border-box;
    border: 1px solid #c8c8c8;
    background: #f0f0f0;
    font-size: 10.5px;
    color: #666;
  }

  .browser-row {
    height: 23px;
    display: flex;
    align-items: center;
    gap: 9px;
    padding-left: 5px;
  }

  .browser-row + .browser-row {
    border-top: 1px solid #c8c8c8;
  }

  .navbar {
    position: absolute;
    left: 363px;
    top: 513px;
    height: 24px;
    width: 237px;
    box-sizing: border-box;
    background: #f0f0f0;
    display: flex;
    align-items: center;
    gap: 3px;
  }

  .navbar > .caret {
    margin-left: -1px;
  }

  .navon {
    width: 33px;
    height: 24px;
    flex: none;
    background: #0696d7;
    display: flex;
    align-items: center;
    gap: 3px;
    padding-left: 2px;
    box-sizing: border-box;
  }

  .n1 {
    margin-left: 0;
  }

  .n2 {
    margin-left: 7px;
  }

  .n3 {
    margin-left: 7px;
  }

  .n4 {
    margin-left: 7px;
  }

  .n5 {
    margin-left: 3px;
  }

  .n6 {
    margin-left: 1px;
  }

  .n7 {
    margin-left: 3px;
  }

  .timeline {
    height: 50px;
    flex: none;
    box-sizing: border-box;
    border-top: 2px solid #c8c8c8;
    background: #f0f0f0;
    display: flex;
    align-items: center;
    padding-left: 11px;
    padding-right: 13px;
  }

  .c {
    margin-left: 12px;
  }

  .last {
    margin-left: 14px;
  }

  .track {
    position: relative;
    margin-left: 22px;
    width: 118px;
    height: 48px;
  }

  .features {
    display: flex;
    padding-top: 14px;
  }

  .bracket {
    position: absolute;
    left: 8px;
    top: 33px;
    display: block;
  }

  .marker {
    position: absolute;
    left: 111px;
    top: 9px;
    display: block;
  }

  .taskbar {
    height: 40px;
    flex: none;
    background: #1b1b1b;
    display: flex;
    align-items: stretch;
    color: #fff;
  }

  .start {
    width: 48px;
    display: flex;
    align-items: center;
    justify-content: center;
    flex: none;
  }

  .search-box {
    width: 344px;
    box-sizing: border-box;
    background: #f2f2f2;
    border-top: 1px solid #ccc;
    display: flex;
    align-items: center;
    padding-left: 13px;
    gap: 11px;
    font: 14px 'Open Sans', sans-serif;
    color: #333;
  }

  .tbicon {
    width: 49px;
    display: flex;
    align-items: center;
    justify-content: center;
    flex: none;
    box-sizing: border-box;
  }

  .tbicon.open {
    box-shadow: inset 0 -2px 0 #76b9ed;
  }

  .tbicon.active {
    background: #3b3b3b;
  }

  .tray {
    display: flex;
    align-items: center;
    padding-right: 10px;
    font: 13.5px 'Open Sans', sans-serif;
    color: #eee;
  }

  .cloud {
    margin-left: 71px;
  }

  .temp {
    margin-left: 9px;
  }

  .weather {
    margin-left: 9px;
  }

  .up {
    margin-left: 16px;
  }

  .syn {
    margin-left: 9px;
  }

  .bat {
    margin-left: 8px;
  }

  .wifi {
    margin-left: 11px;
  }

  .lang {
    margin-left: 12px;
    font-size: 11px;
  }

  .clock {
    width: 56px;
    margin-left: 19px;
    display: flex;
    flex-direction: column;
    align-items: center;
    font-size: 11.5px;
    line-height: 18px;
    white-space: nowrap;
  }

  .notif {
    position: relative;
    width: 46px;
    height: 40px;
    display: flex;
    align-items: center;
    justify-content: center;
  }

  .badge {
    position: absolute;
    right: 9px;
    top: 17px;
    width: 14px;
    height: 14px;
    border-radius: 50%;
    background: #2b2b2b;
    border: 1px solid #999;
    font-size: 10px;
    font-weight: 700;
    line-height: 14px;
    text-align: center;
    color: #fff;
  }
</style>
